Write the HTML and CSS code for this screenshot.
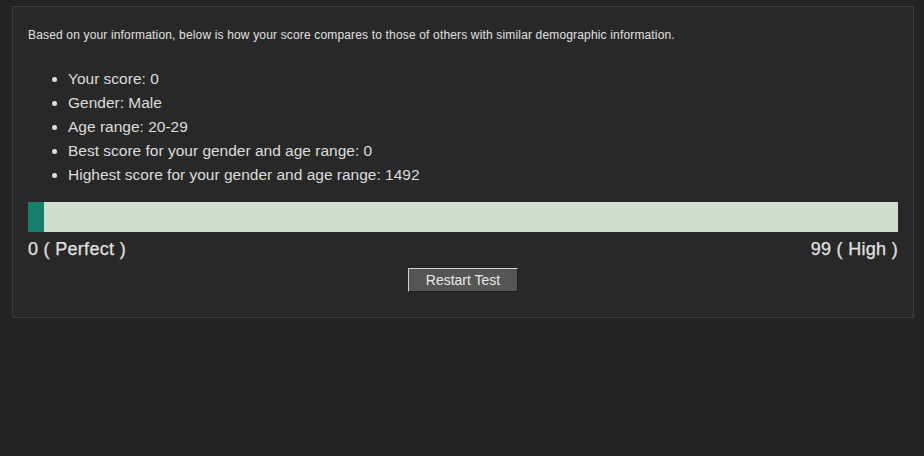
FILE: index.html
```html
<!DOCTYPE html>
<html>
<head>
<meta charset="utf-8">
<link rel="stylesheet" href="styles.css">
</head>
<body>
<div class="panel">
  <p class="intro">Based on your information, below is how your score compares to those of others with similar demographic information.</p>
  <ul class="stats">
    <li>Your score: 0</li>
    <li>Gender: Male</li>
    <li>Age range: 20-29</li>
    <li>Best score for your gender and age range: 0</li>
    <li>Highest score for your gender and age range: 1492</li>
  </ul>
  <div class="bar"><div class="fill" style="width:16px"></div></div>
  <div class="labels"><span>0 ( Perfect )</span><span>99 ( High )</span></div>
  <div class="actions"><button class="btn">Restart Test</button></div>
</div>
</body>
</html>
```

FILE: styles.css
```css
html, body {
  margin: 0;
  padding: 0;
  background: #232323;
}
body {
  font-family: "Liberation Sans", Arial, sans-serif;
  color: #e0e0e0;
}
.panel {
  margin: 6px 0 0 12px;
  width: 870px;
  padding: 21px 15px 25px 15px;
  border: 1px solid #3c3c3c;
  background: #282828;
}
.intro {
  margin: 0;
  font-size: 12px;
  line-height: 14px;
  letter-spacing: 0.16px;
}
.stats {
  margin: 25px 0 15px 0;
  padding: 0 0 0 40px;
  font-size: 15.5px;
  line-height: 24px;
  color: #dcdcdc;
}
.bar {
  height: 30px;
  background: #cfdfcc;
  display: flex;
}
.fill {
  background: #13806a;
  height: 100%;
}
.labels {
  margin-top: 6px;
  display: flex;
  justify-content: space-between;
  font-size: 18px;
  line-height: 22px;
  letter-spacing: 0.3px;
  -webkit-text-stroke: 0.25px #e0e0e0;
}
.actions {
  margin-top: 8px;
  display: flex;
  justify-content: center;
}
.btn {
  width: 110px;
  height: 24px;
  padding: 0;
  background: #555555;
  color: #e8e8e8;
  font-family: "Liberation Sans", Arial, sans-serif;
  font-size: 14px;
  border: 1px solid;
  border-color: #d0d0d0 #1a1a1a #1a1a1a #d0d0d0;
}
```
